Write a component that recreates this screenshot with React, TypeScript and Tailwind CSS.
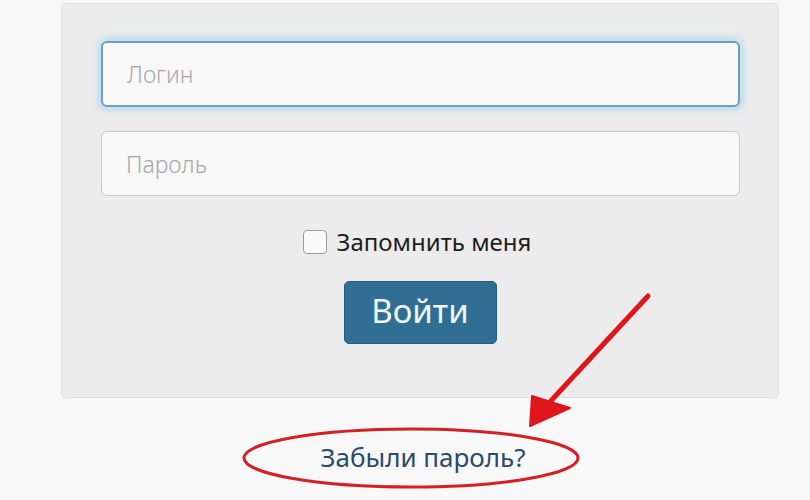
import React from "react";

export default function App() {
  return (
    <div
      className="relative w-[810px] h-[500px] overflow-hidden bg-[#f8f8f8]"
      style={{ fontFamily: '"Noto Sans", "Open Sans", sans-serif' }}
    >
      {/* Login panel */}
      <div className="ml-[61px] mt-[3px] w-[718px] h-[395px] rounded-[5px] border border-[#dcdcdc] bg-[#ececec] px-[39px] pt-[37px]">
        <input
          placeholder="Логин"
          className="block w-[639px] h-[66px] rounded-[6px] border-2 border-[#6e9ec0] bg-[#f8f8f8] px-[24px] text-[23px] font-light text-[#555] placeholder-[#a6a6a6] shadow-[0_0_8px_3px_rgba(140,200,240,0.55)] outline-none"
        />
        <input
          placeholder="Пароль"
          className="mt-[24px] block w-[639px] h-[65px] rounded-[6px] border border-[#c8c8c8] bg-[#f8f8f8] px-[24px] text-[23px] font-light text-[#555] placeholder-[#a6a6a6] outline-none"
        />

        <label className="mt-[28px] flex items-center justify-center gap-[10px] pr-[6px] text-[24px] text-[#1e1e1e]">
          <span className="w-[24px] h-[24px] rounded-[4px] border border-[#9a9a9a] bg-[#fafafa]" />
          <span>Запомнить меня</span>
        </label>

        <div className="mt-[21px] flex justify-center">
          <button className="w-[153px] h-[63px] rounded-[5px] border border-[#2a5a78] bg-[#306f93] text-[33px] text-[#f2f7fa] pb-[4px]">
            Войти
          </button>
        </div>
      </div>

      {/* Forgot password link */}
      <div className="mt-[40px] flex justify-center pl-[36px]">
        <a href="#" className="text-[26px] text-[#2b4b6b]">
          Забыли пароль?
        </a>
      </div>

      {/* Red annotation overlay */}
      <svg
        className="absolute inset-0 pointer-events-none"
        width="810"
        height="500"
        viewBox="0 0 810 500"
      >
        <ellipse cx="411" cy="458" rx="167" ry="29" fill="none" stroke="#d31f26" strokeWidth="3" />
        <line x1="648" y1="296" x2="548" y2="404" stroke="#e0161d" strokeWidth="5" strokeLinecap="round" />
        <polygon points="530,426 532,396 570,408" fill="#e0161d" stroke="#e0161d" strokeWidth="2" strokeLinejoin="round" />
      </svg>
    </div>
  );
}
